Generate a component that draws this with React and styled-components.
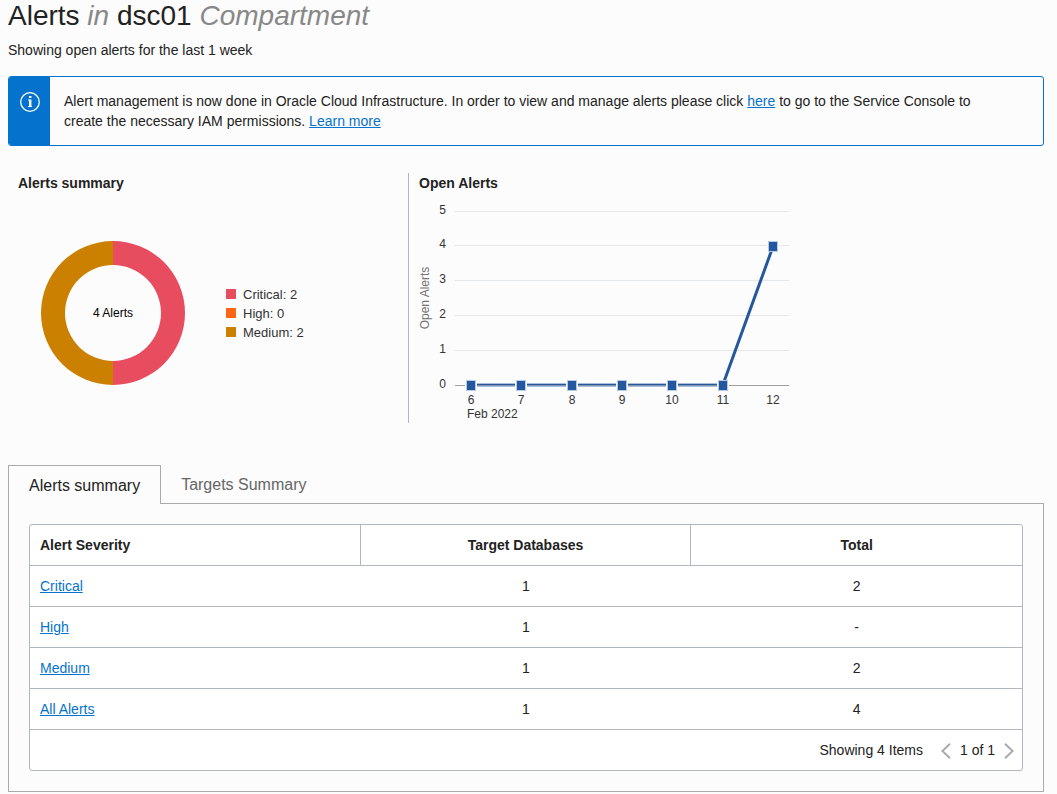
import React, { useState } from "react";
import styled, { createGlobalStyle } from "styled-components";

const GlobalStyle = createGlobalStyle`
  * {
    box-sizing: border-box;
  }
  body {
    margin: 0;
    background: #fcfcfc;
    color: #222;
    font-family: "Liberation Sans", Arial, sans-serif;
    font-size: 14px;
    line-height: 20px;
  }
  button {
    font-family: inherit;
  }
`;

const Page = styled.main`
  padding: 0 13px 2px 8px;
`;

const Title = styled.h1`
  margin: 0;
  font-size: 28px;
  line-height: 32px;
  font-weight: 400;
  em {
    color: #888;
  }
`;

const Subtitle = styled.p`
  margin: 8px 0 16px;
`;

const Link = styled.a`
  color: #0572ce;
  text-decoration: underline;
  text-underline-offset: 1px;
`;

const Banner = styled.section`
  display: flex;
  border: 1px solid #0572ce;
  border-radius: 3px;
  overflow: hidden;
`;

const BannerIcon = styled.div`
  flex: 0 0 41px;
  display: flex;
  justify-content: center;
  padding-top: 15px;
  background: #0572ce;
`;

const BannerText = styled.p`
  margin: 0;
  padding: 14px 40px 14px 14px;
`;

const Charts = styled.div`
  display: flex;
  min-height: 250px;
  margin: 27px 0 42px;
`;

const ChartPanel = styled.section`
  flex: ${(p) => (p.$grow ? "1 1 0" : "0 0 400px")};
  padding: 0 10px;
  border-left: ${(p) => (p.$divided ? "1px solid #b1b6c0" : "none")};
`;

const ChartHeading = styled.h2`
  margin: 0;
  font-size: 14px;
  line-height: 20px;
  font-weight: 700;
`;

const DonutRow = styled.div`
  display: flex;
  align-items: center;
  gap: 41px;
  padding: 48px 0 0 23px;
`;

const LineRow = styled.div`
  padding-top: 2px;
`;

const Legend = styled.ul`
  margin: 0;
  padding: 0;
  list-style: none;
`;

const LegendItem = styled.li`
  display: flex;
  align-items: center;
  gap: 7px;
  font-size: 13px;
  line-height: 19px;
  color: #333;
  &::before {
    content: "";
    width: 10px;
    height: 10px;
    background: ${(p) => p.$color};
  }
`;

const Drawing = styled.svg`
  display: block;
  flex: none;
  font-family: "Liberation Sans", Arial, sans-serif;
  font-size: 12px;
`;

const TabBar = styled.div`
  display: flex;
  height: 38px;
`;

const Tab = styled.button`
  position: relative;
  height: ${(p) => (p.$active ? "39px" : "38px")};
  padding: ${(p) => (p.$active ? "1px 20px 0" : "2px 20px 0")};
  border: ${(p) => (p.$active ? "1px solid #aaa" : "0")};
  border-bottom: 0;
  background: ${(p) => (p.$active ? "#fcfcfc" : "transparent")};
  font-size: 16px;
  line-height: 20px;
  color: ${(p) => (p.$active ? "#222" : "#666")};
  cursor: pointer;
`;

const TabPanel = styled.div`
  padding: 20px;
  border: 1px solid #aaa;
`;

const TableFrame = styled.div`
  border: 1px solid #b1b6c0;
  border-radius: 3px;
  background: #fff;
  overflow: hidden;
`;

const Table = styled.table`
  width: 100%;
  table-layout: fixed;
  border-collapse: separate;
  border-spacing: 0;
`;

const HeadCell = styled.th`
  height: 41px;
  padding: 0 10px;
  text-align: ${(p) => p.$align || "center"};
  border-bottom: 1px solid #b1b6c0;
  &:not(:last-child) {
    border-right: 1px solid #b1b6c0;
  }
`;

const Cell = styled.td`
  height: 41px;
  padding: 0 10px;
  text-align: ${(p) => p.$align || "center"};
  border-bottom: 1px solid #b1b6c0;
`;

const Footer = styled.div`
  display: flex;
  align-items: center;
  justify-content: flex-end;
  height: 40px;
  padding-right: 8px;
`;

const Pager = styled.nav`
  display: flex;
  align-items: center;
  gap: 9px;
  margin-left: 18px;
`;

const PagerButton = styled.button`
  display: flex;
  padding: 2px 0 0;
  border: 0;
  background: none;
  color: #aaa;
`;

const severities = [
  { name: "Critical", count: 2, color: "#e84c5f" },
  { name: "High", count: 0, color: "#ff6314" },
  { name: "Medium", count: 2, color: "#cc8000" },
];

const targetRows = [
  ["Critical", "1", "2"],
  ["High", "1", "-"],
  ["Medium", "1", "2"],
  ["All Alerts", "1", "4"],
];

const gridLines = [
  { value: 5, y: 16 },
  { value: 4, y: 50 },
  { value: 3, y: 85 },
  { value: 2, y: 120 },
  { value: 1, y: 155 },
  { value: 0, y: 190 },
];

const points = [
  { day: 6, x: 52, y: 190 },
  { day: 7, x: 102, y: 190 },
  { day: 8, x: 153, y: 190 },
  { day: 9, x: 203, y: 190 },
  { day: 10, x: 253, y: 190 },
  { day: 11, x: 304, y: 190 },
  { day: 12, x: 354, y: 51 },
];

function InfoIcon() {
  return (
    <svg width="20" height="20" viewBox="0 0 20 20" aria-hidden="true">
      <circle cx="10" cy="10" r="9.3" fill="none" stroke="#fff" strokeWidth="1.3" />
      <rect x="9" y="4" width="2.4" height="2" fill="#fff" />
      <path d="M8 7.6h3.4V14H12v1H8v-1h1V8.6H8z" fill="#fff" />
    </svg>
  );
}

function Chevron({ right }) {
  return (
    <svg width="10" height="16" viewBox="0 0 10 16" aria-hidden="true">
      <path
        d={right ? "M1 .8 8.6 8 1 15.2" : "M9 .8 1.4 8 9 15.2"}
        fill="none"
        stroke="currentColor"
        strokeWidth="2"
      />
    </svg>
  );
}

function Donut() {
  return (
    <Drawing width="144" height="144" role="img" aria-label="4 Alerts">
      <path d="M72 0a72 72 0 0 1 0 144v-24a48 48 0 0 0 0-96z" fill="#e84c5f" />
      <path d="M72 0a72 72 0 0 0 0 144v-24a48 48 0 0 1 0-96z" fill="#cc8000" />
      <text x="72" y="76" textAnchor="middle" fill="#000">
        4 Alerts
      </text>
    </Drawing>
  );
}

function LineChart() {
  return (
    <Drawing width="372" height="228" role="img" aria-label="Open Alerts by day">
      <text transform="translate(10 103) rotate(-90)" textAnchor="middle" fill="#737373">
        Open Alerts
      </text>
      {gridLines.map(({ value, y }) => (
        <g key={value}>
          <rect x="36" y={y} width="334" height="1" fill={value ? "#e4e8ea" : "#9e9e9e"} />
          <text x="27" y={y + 3} textAnchor="end" fill="#333">
            {value}
          </text>
        </g>
      ))}
      <path d="M304 189.5 354 51.5" fill="none" stroke="#24579e" strokeWidth="3" />
      <rect x="52" y="188" width="252" height="1" fill="#a9bfdd" />
      <rect x="52" y="189" width="252" height="1" fill="#24579e" />
      <rect x="52" y="190" width="252" height="1" fill="#7f93ad" />
      <rect x="52" y="191" width="252" height="1" fill="#a9bfdd" />
      {points.map(({ day, x, y }) => (
        <g key={day}>
          <rect x={x - 6} y={y - 5} width="12" height="11" fill="#fcfcfc" />
          <rect x={x - 5} y={y - 5} width="10" height="11" fill="#b5cbe5" />
          <rect x={x - 4} y={y - 4} width="8" height="9" fill="#24579e" />
          <text x={x} y="209" textAnchor="middle" fill="#333">
            {day}
          </text>
        </g>
      ))}
      <text x="48" y="223" fill="#333">
        Feb 2022
      </text>
    </Drawing>
  );
}

export default function App() {
  const [tab, setTab] = useState("Alerts summary");
  return (
    <>
      <GlobalStyle />
      <Page>
        <Title>
          Alerts <em>in</em> dsc01 <em>Compartment</em>
        </Title>
        <Subtitle>Showing open alerts for the last 1 week</Subtitle>
        <Banner>
          <BannerIcon>
            <InfoIcon />
          </BannerIcon>
          <BannerText>
            Alert management is now done in Oracle Cloud Infrastructure. In order to view and manage
            alerts please click <Link href="#console">here</Link> to go to the Service Console to
            create the necessary IAM permissions. <Link href="#learn">Learn more</Link>
          </BannerText>
        </Banner>
        <Charts>
          <ChartPanel>
            <ChartHeading>Alerts summary</ChartHeading>
            <DonutRow>
              <Donut />
              <Legend>
                {severities.map((s) => (
                  <LegendItem key={s.name} $color={s.color}>
                    {`${s.name}: ${s.count}`}
                  </LegendItem>
                ))}
              </Legend>
            </DonutRow>
          </ChartPanel>
          <ChartPanel $grow $divided>
            <ChartHeading>Open Alerts</ChartHeading>
            <LineRow>
              <LineChart />
            </LineRow>
          </ChartPanel>
        </Charts>
        <TabBar role="tablist">
          {["Alerts summary", "Targets Summary"].map((name) => (
            <Tab
              key={name}
              type="button"
              role="tab"
              aria-selected={tab === name}
              $active={tab === name}
              onClick={() => setTab(name)}
            >
              {name}
            </Tab>
          ))}
        </TabBar>
        <TabPanel role="tabpanel">
          <TableFrame>
            <Table>
              <thead>
                <tr>
                  <HeadCell scope="col" $align="left">Alert Severity</HeadCell>
                  <HeadCell scope="col">Target Databases</HeadCell>
                  <HeadCell scope="col">Total</HeadCell>
                </tr>
              </thead>
              <tbody>
                {targetRows.map(([name, databases, total]) => (
                  <tr key={name}>
                    <Cell $align="left">
                      <Link href="#alerts">{name}</Link>
                    </Cell>
                    <Cell>{databases}</Cell>
                    <Cell>{total}</Cell>
                  </tr>
                ))}
              </tbody>
            </Table>
            <Footer>
              <span>Showing 4 Items</span>
              <Pager aria-label="Pagination">
                <PagerButton type="button" aria-label="Previous page">
                  <Chevron />
                </PagerButton>
                <span>1 of 1</span>
                <PagerButton type="button" aria-label="Next page">
                  <Chevron right />
                </PagerButton>
              </Pager>
            </Footer>
          </TableFrame>
        </TabPanel>
      </Page>
    </>
  );
}
